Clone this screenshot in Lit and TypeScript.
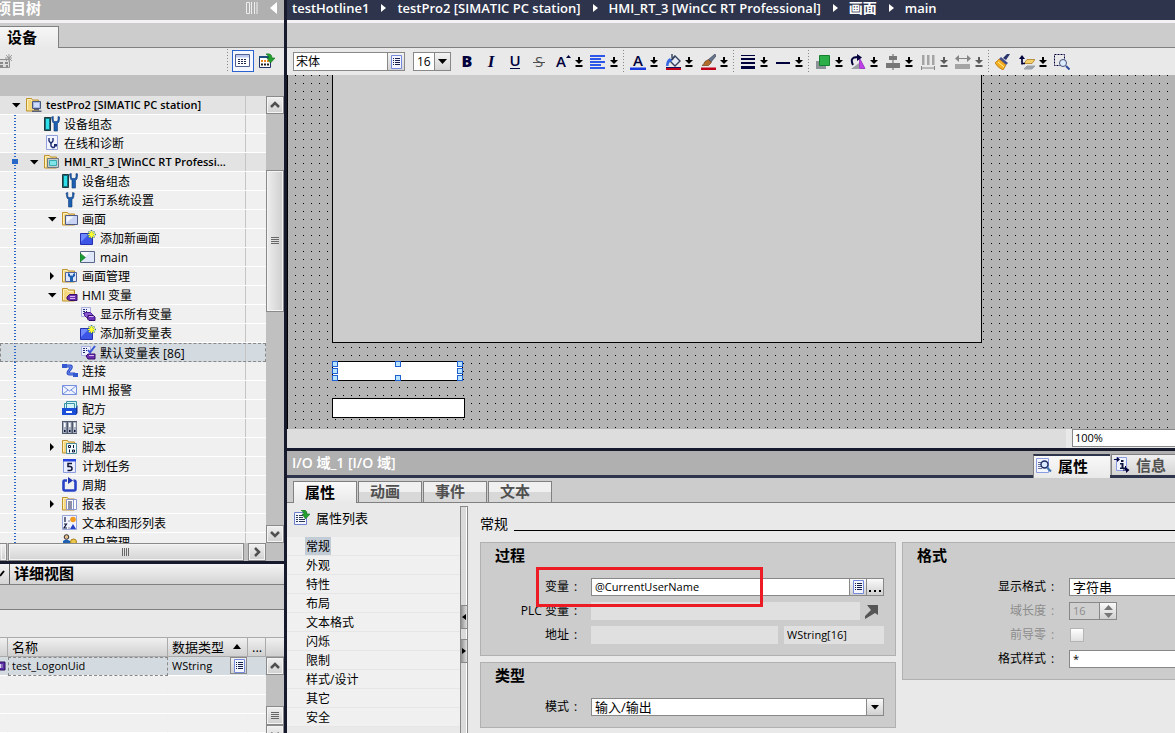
import { LitElement, html, svg, css, nothing, TemplateResult } from "lit";
import { customElement } from "lit/decorators.js";
import { classMap } from "lit/directives/class-map.js";

const folder = svg`<path d="M.5 14V1.5h5l1 1.500h6V14z" fill="#f5d780" stroke="#c0922c"/><path d="M1.500 13V2.500H5l1 2h5" fill="none" stroke="#fdf0b8"/>`;
const page = svg`<path d="M1.500 1.500h9v9h-9z" fill="#eef0ff" stroke="#a8b0e0"/><path d="M3 3.500h2M6 3.500h1M3 5.500h2M6 5.500h1M3 7.500h2" stroke="#222a70"/>`;
const star = svg`<path d="M11.500 0v9M7 4.500h9M8.500 1.500l6 6M14.500 1.500l-6 6" stroke="#3a7a88" stroke-width="1.600"/><path d="M11.500 1v7M8 4.500h7M9 2l5 5M14 2l-5 5" stroke="#ffff30" stroke-width="1.200"/>`;
const wrench = (x: number, y = 0) => svg`<path transform="translate(${x} ${y})" d="M0 1l1 5 1.500 1.500V15h3.500V7.500L7.500 6l.8-5L6.500.5V4L5.500 5.500h-3L1.800 4V.5z" fill="#1d5fb0" stroke="#123c7a" stroke-width=".6"/>`;

const ICONS: Record<string, TemplateResult> = {
  station: svg`${folder}<path d="M6.500 4.500h8v7h-8z" fill="#9fb4e0" stroke="#49577a"/><path d="M8 6h5v4H8z" fill="#cfdcff"/><path d="M8 12h5v1H8zM6 13.500h9.500V15H6z" fill="#59617a"/>`,
  device: svg`<path d="M.5 1.500h6v13h-6z" fill="#15707a" stroke="#203840"/><path d="M2 3h3v10H2z" fill="#2fe0ea"/>${wrench(7.500)}`,
  diagnose: svg`<path d="M2.500.5h11v14h-11z" fill="#f2f4ff" stroke="#93a0dc"/><path d="M5 3v3l2 2.500L9 6V3M7 8.500V11l1.500 1.500H10l1-1.500" fill="none" stroke="#1a2a70" stroke-width="1.400"/><path d="M10 9h3v2.500h-3z" fill="#1a2a70"/>`,
  hmi: svg`${folder}<path d="M3.500 4.500h11v9h-11z" fill="#c6cacd" stroke="#6d7a84"/><path d="M5.500 6.500h7v5h-7z" fill="#7fe4e8" stroke="#3aa9b0"/>`,
  runtime: svg`${wrench(4)}`,
  screens: svg`${folder}<path d="M3.500 4.500h12v9h-12z" fill="#c9d4f2" stroke="#4d5a86"/><path d="M4.500 5.500H12l-7.500 6z" fill="#f4f7ff"/>`,
  add: svg`<path d="M.5 3.500h12v11H.5z" fill="#3c55e6" stroke="#2430b0"/><path d="M1 4h8l-8 8z" fill="#6f8bff"/>${star}`,
  main: svg`<path d="M.5 2.500h14v11H.5z" fill="#dfe7fb" stroke="#5a6686"/><path d="M1 3h9L1 12z" fill="#f8faff"/><path d="M0 4l5.500 4.500L0 13z" fill="#1c9a34" stroke="#0e6a20" stroke-width=".5"/>`,
  manage: svg`${folder}<path d="M3.500 4.500h11v9h-11z" fill="#dfe6fb" stroke="#55659a"/><path d="M6 5v3l2 1.500V14h3V9.500L13 8V5l-2 1v1.500H8V6z" fill="#1d5fb0"/>`,
  tags: svg`${folder}<path d="M5 10l2.500-2.500H15v6H7.500L5 12z" fill="#6b2fb0" stroke="#35106c"/><path d="M8 9.500h5M8 11.500h5" stroke="#d6b8f5"/>`,
  allTags: svg`${page}<path d="M4.500 6.500h6l2 2v3h-6l-2-2z" fill="#8a58d0" stroke="#4a1f90"/><path d="M8 9.500h5.500l1.500 1.500v3.500H9L7.500 13z" fill="#6c34ba" stroke="#35106c"/><path d="M9 10.500h4.500" stroke="#d6b8f5"/>`,
  tagTable: svg`${page}<path d="M8 5l2 2.500L15 1" fill="none" stroke="#3754d8" stroke-width="2"/><path d="M6 11l2-2h7v5H8z" fill="#6b2fb0" stroke="#35106c"/><path d="M9 10.500h5" stroke="#d6b8f5"/>`,
  connect: svg`<path d="M2 3h6q2 0 1 2L6.500 8.500Q5 11 8 11h5" fill="none" stroke="#2746c0" stroke-width="3"/><path d="M2 3h6q2 0 1 2L6.500 8.500Q5 11 8 11h5" fill="none" stroke="#7f9cff"/><path d="M0 1h5v4H0zM11 10h5v4h-5z" fill="#3458d0"/>`,
  mail: svg`<path d="M.5 3.500h14v9H.5z" fill="#eef3ff" stroke="#7590dc"/><path d="M1 4l6.500 5L14 4M1 12l5-4M14 12L9 8" fill="none" stroke="#7590dc"/>`,
  recipe: svg`<path d="M4.500.5h10v7h-10zM2.500 2.500h10v7h-10z" fill="#d5f4f8" stroke="#3b92a8"/><path d="M0 7h14v7H0z" fill="#1c4fd8"/><path d="M14 7l1.500-3v8L14 14z" fill="#12309a"/><path d="M4 10h6v2H4z" fill="#fff"/>`,
  logs: svg`<path d="M0 1h15v13H0z" fill="#50586e"/><path d="M1 2h3.500v11H1zM6 2h3.500v11H6zM11 2h3.500v11H11z" fill="#a8b0c0"/><path d="M2 3h1.500v4H2zM7 3h1.500v4H7zM12 3h1.500v4H12z" fill="#fff"/><path d="M2 10h1.500v2H2zM7 10h1.500v2H7zM12 10h1.500v2H12z" fill="#10163a"/>`,
  script: svg`${folder}<path d="M4.500 4.500h10v10h-10z" fill="#f0fbff" stroke="#4f8c9c"/><path d="M6.500 6.500h2v2h-2zM11.500 6v3M7.500 10.500V13.500M10.500 11h2v2h-2z" fill="none" stroke="#10163a"/>`,
  task: svg`<path d="M1.500 1.500h12v13h-12z" fill="#e9edff" stroke="#8a9be0"/><path d="M1 1h13v2.500H1z" fill="#2a44e0"/><path d="M10 5.500H6v3h2q2 0 2 2t-2 2H5.500" fill="none" stroke="#10163a" stroke-width="1.500"/>`,
  cycle: svg`<path d="M5 3.500H2.500Q1.500 3.500 1.500 5v7q0 1.500 1.500 1.500h9q1.500 0 1.500-1.500V5q0-1.500-2-1.500" fill="none" stroke="#2843c8" stroke-width="2.600"/><path d="M6 0l5 3.500-5 3.500z" fill="#2036b0"/>`,
  report: svg`${folder}<path d="M4.500 3.500h10v10h-10z" fill="#fff" stroke="#8795cc"/><path d="M6 6h4M6 8h4M6 10h4M6 12h4" stroke="#1a2350"/><path d="M11.500 4v9" stroke="#8795cc"/>`,
  list: svg`<path d="M.5.500h14v14H.5z" fill="#f1f4ff" stroke="#9aa6dc"/><path d="M3 2v5M2 9h2.500L2 13h3M6.500 6h1M6.500 13h1" fill="none" stroke="#10163a" stroke-width="1.200"/><circle cx="11" cy="4.500" r="2.800" fill="#f09a20"/><path d="M8 14l3-5 3 5z" fill="#2843c8"/>`,
  users: svg`<circle cx="4.500" cy="3" r="2.300" fill="#e8bd90" stroke="#303030"/><path d="M1 15V7q3-3 7 0v8z" fill="#1d5fb0"/><circle cx="11.500" cy="8" r="3" fill="#ecc64a" stroke="#a8821c"/><path d="M10.500 11h2v4h-2z" fill="#d0a22c"/>`,
  ruler: svg`<path d="M1.500 6.500h11v8h-11z" fill="#ddd" stroke="#8c8c8c"/><path d="M3 9h3v2H3zM8 9h3v2H8zM3 12h3v2H3zM9 12h2v2H9z" fill="#888"/><path d="M12 1v8M8 5h7M9 2l6 6M15 2L9 8" stroke="#999"/>`,
  grid: svg`<path d="M.5 1.500h14v12H.5z" fill="#fff" stroke="#506090"/><path d="M1 2h13v2.500H1z" fill="#bcc8f0"/><path d="M3 6.500h9M3 8.500h9M3 10.500h9" stroke="#222a50" stroke-dasharray="2 1"/>`,
  gridOut: svg`<path d="M.5 3.500h11v11H.5z" fill="#fff" stroke="#1d3565"/><path d="M0 3h10v2H0z" fill="#1d4f80"/><path d="M2 8h8" stroke="#e88820" stroke-width="2" stroke-dasharray="2 1"/><path d="M2 11.500h8" stroke="#202020" stroke-width="2" stroke-dasharray="2 1"/><path d="M7 1q6-1 6 4h3l-4.500 5L8 5h2q0-2-3-4z" fill="#23a030" stroke="#12701c" stroke-width=".6"/>`,
  propList: svg`<path d="M.5 2.500h12v12H.5z" fill="#f4f6ff" stroke="#6e7fd0"/><path d="M2 5.500h2M5 5.500h4M2 7.500h2M5 7.500h4M2 9.500h2M5 9.500h6M2 11.500h2M5 11.500h6" stroke="#303858"/><path d="M7 0q6-1 6 4h3l-4.500 5L8 4h2q0-2-3-4z" fill="#23a030" stroke="#12701c" stroke-width=".6"/>`,
  pick: svg`<path d="M3.500 1.500h10v13h-10z" fill="#f3f5ff" stroke="#7488dc"/><path d="M5 4.500h1M7 4.500h5M5 6.500h1M7 6.500h5M5 8.500h1M7 8.500h5M5 10.500h1M7 10.500h5" stroke="#17204c"/>`,
  bold: svg`<text x="8" y="13" text-anchor="middle" font-size="16" font-weight="800">B</text>`,
  italic: svg`<text class="serif" x="8" y="13" text-anchor="middle" font-size="17">I</text>`,
  underline: svg`<text x="8" y="12" text-anchor="middle" font-size="15" font-weight="600">U</text><path d="M3 14.500h10" stroke="#00003c"/>`,
  strike: svg`<text class="soft" x="8" y="13" text-anchor="middle" font-size="15">S</text><path d="M2 8.500h12" stroke="#505050"/>`,
  grow: svg`<text x="6" y="13" text-anchor="middle" font-size="15" font-weight="600">A</text><path d="M11 4l2.500-3L16 4z" fill="#00003c"/>`,
  align: svg`<path d="M0 2h15M0 5h11M0 8h15M0 11h11M0 14h15" stroke="#2c57e8" stroke-width="1.800"/>`,
  color: svg`<text x="8" y="12" text-anchor="middle" font-size="15" font-weight="600">A</text><path d="M0 13.500h16v2.500H0z" fill="#1838e0"/>`,
  fill: svg`<path d="M6 6l4-4 5 5-5 5-5-5z" fill="#e6ebf4" stroke="#33405e" stroke-width="1.400"/><path d="M7 4V0M10 2l-3 4" stroke="#33405e" stroke-width="1.400"/><path d="M5 4Q1 6 1 12h2.500q0-4 3.500-5z" fill="#3568e0"/><path d="M1 13.500h15V16H1z" fill="#c00018"/><path d="M1 13.500h15" stroke="#101460"/>`,
  brush: svg`<path d="M15 0L8.500 5.500l2.500 2.500 5-6z" fill="#66748c" stroke="#30384a" stroke-width=".6"/><path d="M8.500 5.500l3 3-3 3H2q2-1 3-4z" fill="#b06c28" stroke="#5e3410" stroke-width=".6"/><path d="M1 13.500h15V16H1z" fill="#c00018"/>`,
  weights: svg`<path d="M1 1.500h14" stroke="#00003c"/><path d="M1 5h14" stroke="#00003c" stroke-width="2"/><path d="M1 9h14" stroke="#00003c" stroke-width="2"/><path d="M1 13.500h14" stroke="#00003c" stroke-width="3"/>`,
  line: svg`<path d="M1 9h14" stroke="#00003c" stroke-width="2"/>`,
  order: svg`<path d="M1 7h10v8H1z" fill="#8b9298"/><path d="M4.500 1.500h10v10h-10z" fill="#2cae48" stroke="#158030"/>`,
  rotate: svg`<path d="M1 15l8-6v6z" fill="#9aa0a6"/><path d="M9.500 14.500V4l5.500 10.500z" fill="#c040e8" stroke="#8820b8" stroke-width=".7"/><path d="M3 11Q-1 3 8 3" fill="none" stroke="#00003c" stroke-width="2"/><path d="M7 0l5 3.500L7 7z" fill="#00003c"/>`,
  center: svg`<path d="M8 0v16" stroke="#606060"/><path d="M4 2h8v4H4zM1 9h14v5H1z" fill="#777"/>`,
  spread: svg`<path d="M2 1h2.500v10H2zM7 1h2.500v10H7zM12 1h2.500v10H12z" fill="#777"/><path d="M1 14h14M1.500 12v4M14.500 12v4" stroke="#444"/>`,
  width: svg`<path d="M3 4.500h10" stroke="#444"/><path d="M0 4.500L4 1v7zM16 4.500L12 1v7z" fill="#444"/><path d="M0 10h15v5H0z" fill="#777"/>`,
  painter: svg`<path d="M15 0l-4 6-3-2 4-4z" fill="#26336c"/><path d="M6 3l7 6-2 2-7-6z" fill="#44508c"/><path d="M4 5l7 6-3 5Q3 14 0 9z" fill="#f4b020" stroke="#b06a10" stroke-width=".7"/><path d="M3 8l6 5" stroke="#fff0a0"/>`,
  layers: svg`<path d="M5 15l3-3h8l-3 3z" fill="#9ba2aa" stroke="#9ba2aa"/><path d="M5 9.500l3-4h8l-3 4z" fill="#f2cf68" stroke="#b07c20" stroke-width=".8"/><path d="M3 3v7.500M3 9.500h3" stroke="#00003c" stroke-width="1.700"/><path d="M0 5l3-4 3 4z" fill="#00003c"/>`,
  zoomArea: svg`<path d="M.5.500h10v11H.5z" fill="none" stroke="#00003c" stroke-dasharray="2 1"/><circle cx="9" cy="9" r="3.500" fill="#dcecff" stroke="#44507c"/><path d="M12 12l3.500 3.500" stroke="#2c4ca0" stroke-width="2"/>`,
  goto: svg`<path d="M1 13l6-6-4-5h11v10l-3-2-10 6z" fill="#555" stroke="none"/>`,
  propTab: svg`<path d="M.5.500h12v14H.5z" fill="#f3f6ff" stroke="#8b9ce0"/><path d="M2 4.500h4M2 6.500h3M2 8.500h3M2 10.500h4" stroke="#68739c"/><circle cx="8.500" cy="6.500" r="3.500" fill="#dceaff" stroke="#1e2a60" stroke-width="1.400"/><path d="M11 9.500l4 4" stroke="#4478b0" stroke-width="2.200"/>`,
  infoTab: svg`<path d="M2.500.5h10v13h-10z" fill="#eef3ff" stroke="#8b9ce0"/><path d="M0 2.500h5M9 13h5M11.500 9v4" stroke="#00003c"/><path d="M3 0l3 2.500L3 5zM12 10.500l3.500 2.500-3.500 3z" fill="#00003c"/><path d="M7 3h2.500v2H7zM6 6h3.500v4.500H11V12H6v-1.500h1.500v-3H6z" fill="#10163a"/>`,
};

const icon = (name: string) => html`<svg class="icon" viewBox="0 0 16 16" aria-hidden="true">${ICONS[name]}</svg>`;
const chevron = (dir: string) => html`<svg class="chev ${dir}" viewBox="0 0 12 12" aria-hidden="true"><path d="M2 8l4-4 4 4" fill="none" stroke="#505050" stroke-width="2.500"/></svg>`;

const base = css`
  :host { font-family: "Open Sans", "Noto Sans CJK SC", sans-serif; font-size: 12px; line-height: 18px; color: #000; }
  *, *::before { box-sizing: border-box; }
  button, input, select { font: inherit; color: inherit; margin: 0; padding: 0; border: 0; border-radius: 0; background: none; appearance: none; }
  h1, h2, h3, ul { margin: 0; padding: 0; font: inherit; list-style: none; }
  a { color: inherit; text-decoration: none; }
  .icon { width: 16px; height: 16px; flex: none; display: block; }
  .icon text { font-family: "Open Sans", sans-serif; fill: #00003c; }
  .icon .serif { font-family: "Liberation Serif", serif; font-style: italic; font-weight: 700; }
  .icon .soft { fill: #505050; }
  .chev { width: 12px; height: 12px; display: block; }
  .chev.down { transform: rotate(180deg); }
  .chev.right { transform: rotate(90deg); }
  .push { display: grid; place-items: center; border: 1px solid #8a8a8a; outline: 1px solid #f4f4f4; outline-offset: -2px; background: linear-gradient(#f0f0f0, #d0d0d0); }
`;

interface Node { text: string; level: number; icon: string; arrow?: "open" | "closed"; kind?: string }
const TREE: Node[] = [
  { text: "testPro2 [SIMATIC PC station]", level: 0, icon: "station", arrow: "open", kind: "root" },
  { text: "设备组态", level: 1, icon: "device" },
  { text: "在线和诊断", level: 1, icon: "diagnose" },
  { text: "HMI_RT_3 [WinCC RT Professi...", level: 1, icon: "hmi", arrow: "open", kind: "station" },
  { text: "设备组态", level: 2, icon: "device" },
  { text: "运行系统设置", level: 2, icon: "runtime" },
  { text: "画面", level: 2, icon: "screens", arrow: "open" },
  { text: "添加新画面", level: 3, icon: "add" },
  { text: "main", level: 3, icon: "main" },
  { text: "画面管理", level: 2, icon: "manage", arrow: "closed" },
  { text: "HMI 变量", level: 2, icon: "tags", arrow: "open" },
  { text: "显示所有变量", level: 3, icon: "allTags" },
  { text: "添加新变量表", level: 3, icon: "add" },
  { text: "默认变量表 [86]", level: 3, icon: "tagTable", kind: "selected" },
  { text: "连接", level: 2, icon: "connect" },
  { text: "HMI 报警", level: 2, icon: "mail" },
  { text: "配方", level: 2, icon: "recipe" },
  { text: "记录", level: 2, icon: "logs" },
  { text: "脚本", level: 2, icon: "script", arrow: "closed" },
  { text: "计划任务", level: 2, icon: "task" },
  { text: "周期", level: 2, icon: "cycle" },
  { text: "报表", level: 2, icon: "report", arrow: "closed" },
  { text: "文本和图形列表", level: 2, icon: "list" },
  { text: "用户管理", level: 2, icon: "users" },
];

@customElement("project-tree")
export class ProjectTree extends LitElement {
  static styles = [base, css`
    :host { display: flex; flex-direction: column; min-height: 0; background: #e9e9e9; overflow: hidden; }
    .title { display: flex; align-items: center; gap: 12px; height: 20px; padding-right: 7px; background: #b0b0b0; color: #fff; flex: none; }
    .title h1 { flex: 1; text-indent: -4px; font-size: 15px; font-weight: 700; line-height: 16px; padding-bottom: 5px; }
    .title button { display: block; height: 14px; margin-bottom: 5px; }
    .title svg { display: block; height: 12px; }
    .tabs { height: 28px; border-top: 3px solid #f3f1f3; border-bottom: 1px solid #808080; background: #ccc; flex: none; }
    .tab { display: block; width: 59px; height: 22px; margin-top: 3px; padding: 0 0 2px 7px; text-align: left; font-size: 15px; font-weight: 700; line-height: 18px; background: linear-gradient(#f6f6f6, #e9e9e9); border-top: 1px solid #808080; border-right: 1px solid #808080; }
    .tools { display: flex; align-items: center; height: 27px; flex: none; padding: 0 9px 2px 0; }
    .tools .first { margin: 0 auto 0 -3px; }
    .tools .grid { width: 22px; height: 22px; display: grid; place-items: center; border: 1px solid #2a62d0; background: #f4f7ff; margin: 0 5px 0 4px; }
    .dots { width: 1px; height: 23px; background: repeating-linear-gradient(#888 0 1px, transparent 1px 3px); }
    .head { height: 21px; background: #c0c0c0; flex: none; }
    .body { flex: 1; min-height: 0; display: grid; grid-template-columns: 1fr 18px; overflow: hidden; }
    .rows { overflow: hidden; background: #f0f0f0; }
    .row { display: flex; align-items: center; width: 100%; height: 19px; border-bottom: 1px solid #fff; white-space: nowrap; line-height: 18px;
      background: repeating-linear-gradient(#2a68c8 0 1px, transparent 1px 3px) 14px 0 / 2px 100% no-repeat, linear-gradient(#c4c4c4, #c4c4c4) 245px 0 / 1px 100% no-repeat; }
    .l0 { padding-left: 10px; } .l1 { padding-left: 28px; } .l2 { padding-left: 46px; } .l3 { padding-left: 64px; }
    .arrow { width: 12px; height: 12px; margin-right: 4px; flex: none; }
    .arrow svg { display: block; width: 12px; height: 12px; }
    .label { margin-left: 4px; padding-top: 2px; line-height: 18px; }
    .root, .station { font-size: 11px; font-weight: 600; }
    .root .label, .station .label { padding-top: 0; }
    .root { background: linear-gradient(#c4c4c4, #c4c4c4) 245px 0 / 1px 100% no-repeat #e3e3e3; }
    .station { background: linear-gradient(#2a68c8, #2a68c8) 12px 6px / 6px 5px no-repeat, repeating-linear-gradient(#2a68c8 0 1px, transparent 1px 3px) 14px 0 / 2px 100% no-repeat, linear-gradient(#c4c4c4, #c4c4c4) 245px 0 / 1px 100% no-repeat, #e3e3e3; }
    .selected { background-color: #d4dbe0; border-bottom: 0; outline: 1px dashed #888; outline-offset: -1px; }
    .vbar { display: grid; grid-template-rows: 18px 56px 142px 1fr 18px; background: #c0c0c0; }
    .thumb { grid-row: 3; background: linear-gradient(90deg, #ededed, #cfcfcf); }
    .vbar .end { grid-row: 5; }
    .grip { width: 8px; height: 8px; background: repeating-linear-gradient(#666 0 1px, transparent 1px 2px); }
    .hbar { display: grid; grid-template-columns: 7px 1px 236px 1fr 18px 18px; height: 18px; background: #c0c0c0; flex: none; }
    .hbar .thumb { grid-column: 3; grid-row: 1; background: linear-gradient(#f0f0f0, #d4d4d4); }
    .hbar .grip { background: repeating-linear-gradient(90deg, #666 0 1px, transparent 1px 2px); }
    .hbar .next { grid-column: 5; }
    .hbar .prev { border-left: 0; }
  `];
  render() {
    return html`
      <header class="title"><h1>项目树</h1>
        <button aria-label="停靠"><svg width="12" viewBox="0 0 12 12"><path d="M.5.500h3v11h-3zM5.500 0v12M8.500 0v12M11 0v12" fill="none" stroke="#eee"/></svg></button>
        <button aria-label="折叠"><svg width="7" viewBox="0 0 7 12"><path d="M7 0v12L0 6z" fill="#fff"/></svg></button>
      </header>
      <div class="tabs"><button class="tab">设备</button></div>
      <div class="tools"><button class="first" aria-label="新建">${icon("ruler")}</button><span class="dots"></span>
        <button class="grid" aria-label="详细列表">${icon("grid")}</button><button aria-label="导出列表">${icon("gridOut")}</button></div>
      <div class="head"></div>
      <div class="body">
        <ul class="rows">${TREE.map((n) => html`<li><button class="row l${n.level} ${n.kind ?? ""}">
          <span class="arrow">${n.arrow ? html`<svg viewBox="0 0 12 12"><path d=${n.arrow === "open" ? "M2 4h8.500L6.300 8.500z" : "M4 2v8l4-4z"}/></svg>` : nothing}</span>
          ${icon(n.icon)}<span class="label">${n.text}</span></button></li>`)}</ul>
        <div class="vbar"><button class="push" aria-label="向上">${chevron("up")}</button>
          <div class="push thumb"><span class="grip"></span></div>
          <button class="push end" aria-label="向下">${chevron("down")}</button></div>
      </div>
      <div class="hbar"><button class="push prev" aria-label="向左"></button><div class="push thumb"><span class="grip"></span></div>
        <button class="push next" aria-label="向右">${chevron("right")}</button></div>`;
  }
}

@customElement("detail-view")
export class DetailView extends LitElement {
  static styles = [base, css`
    :host { display: flex; flex-direction: column; background: #e9e9e9; overflow: hidden; }
    .title { display: flex; height: 21px; flex: none; background: linear-gradient(#f4f4f4, #d4d4d4); border-bottom: 1px solid #808080; }
    .fold { width: 10px; border-right: 1px solid #606060; display: grid; place-items: center start; }
    h2 { padding-left: 4px; font-size: 15px; font-weight: 700; line-height: 19px; }
    .strip { height: 25px; flex: none; background: #ccc; border-bottom: 1px solid #808080; }
    .gap { height: 27px; flex: none; }
    .wrap { flex: 1; display: grid; grid-template-columns: 1fr 18px; min-height: 0; background: #f0f0f0; }
    table { width: 100%; border-collapse: separate; border-spacing: 0; table-layout: fixed; }
    th, td { height: 19px; padding: 0 0 1px 4px; text-align: left; font-weight: 400; line-height: 16px; border-right: 1px solid #aaa; border-bottom: 1px solid #fff; overflow: hidden; white-space: nowrap; }
    th { font-size: 13px; height: 20px; background: linear-gradient(#f0f0f0, #d0d0d0); border-top: 1px solid #aaa; border-bottom: 1px solid #aaa; }
    td { border-right-color: transparent; font-size: 11px; }
    .c0 { width: 8px; padding: 0; } .c1 { width: 160px; } .c2 { width: 80px; }
    .cell { display: flex; align-items: center; justify-content: space-between; height: 17px; }
    .sort { margin-right: 6px; width: 8px; }
    .sel td { background: #d4dbe0; }
    .sel .name { outline: 1px dashed #888; outline-offset: -1px; }
    .sel .c0 .icon { margin-left: -10px; }
    .cell .push { width: 17px; height: 17px; outline: 0; }
    .bar { display: grid; grid-template-rows: 20px 18px 31px 19px 19px; background: #c0c0c0; overflow: hidden; }
    .corner { background: linear-gradient(#f0f0f0, #d0d0d0); border: 1px solid #aaa; border-width: 1px 0; }
    .thumb { grid-row: 4; }
    .end { grid-row: 5; }
    .grip { width: 8px; height: 8px; background: repeating-linear-gradient(#666 0 1px, transparent 1px 2px); }
  `];
  render() {
    return html`
      <header class="title"><button class="fold" aria-label="折叠"><svg width="5" height="8" viewBox="0 0 5 8"><path d="M0 6l4-5" stroke="#000" stroke-width="2"/></svg></button><h2>详细视图</h2></header>
      <div class="strip"></div><div class="gap"></div>
      <div class="wrap">
        <div><table>
          <thead><tr><th class="c0"></th><th class="c1">名称</th><th class="c2"><span class="cell">数据类型<svg class="sort" viewBox="0 0 8 5"><path d="M0 5l4-5 4 5z"/></svg></span></th><th>...</th></tr></thead>
          <tbody><tr class="sel"><td class="c0"><svg class="icon" viewBox="0 0 16 16"><path d="M4 4h11v8H4z" fill="#5a2aa8" stroke="#281060"/><path d="M6 6h7v4H6z" fill="#e0d0ff"/><path d="M9 6v4M12 6v4" stroke="#281060"/></svg></td>
            <td class="name">test_LogonUid</td><td><span class="cell">WString<button class="push" aria-label="选择类型">${icon("pick")}</button></span></td><td></td></tr>
            ${[0, 1, 2].map(() => html`<tr><td></td><td></td><td></td><td></td></tr>`)}</tbody>
        </table></div>
        <div class="bar"><span class="corner"></span><button class="push" aria-label="向上">${chevron("up")}</button><div class="push thumb"><span class="grip"></span></div><button class="push end" aria-label="向下">${chevron("down")}</button></div>
      </div>`;
  }
}

interface Tool { icon: string; label: string; drop?: boolean; off?: boolean; sep?: boolean }
const TOOLS: Tool[] = [
  { icon: "bold", label: "粗体" }, { icon: "italic", label: "斜体" }, { icon: "underline", label: "下划线" }, { icon: "strike", label: "删除线" },
  { icon: "grow", label: "字号", drop: true }, { icon: "align", label: "对齐", drop: true, sep: true },
  { icon: "color", label: "文本颜色", drop: true }, { icon: "fill", label: "背景颜色", drop: true }, { icon: "brush", label: "边框颜色", drop: true, sep: true },
  { icon: "weights", label: "线宽", drop: true }, { icon: "line", label: "线型", drop: true, sep: true },
  { icon: "order", label: "层次", drop: true }, { icon: "rotate", label: "旋转", drop: true }, { icon: "center", label: "居中", drop: true },
  { icon: "spread", label: "分布", drop: true, off: true }, { icon: "width", label: "宽度", drop: true, off: true, sep: true },
  { icon: "painter", label: "格式刷" }, { icon: "layers", label: "图层", drop: true }, { icon: "zoomArea", label: "缩放选区" },
];

@customElement("screen-editor")
export class ScreenEditor extends LitElement {
  static styles = [base, css`
    :host { display: flex; flex-direction: column; min-height: 0; min-width: 0; }
    .crumbs { display: flex; align-items: center; gap: 12px; height: 20px; flex: none; padding: 0 5px 4px; background: #2d344b; color: #fff; font-size: 13px; font-weight: 600; line-height: 16px; white-space: nowrap; }
    .crumbs svg { width: 5px; height: 8px; margin: 0 -1px 0 0; }
    .crumbs .cjk { font-size: 14px; }
    .strip { height: 28px; flex: none; background: #ccc; border-top: 3px solid #f3f1f3; border-bottom: 1px solid #808080; }
    .bar { display: flex; align-items: center; height: 27px; flex: none; padding-left: 6px; background: #e9e9e9; overflow: hidden; }
    .combo { display: flex; height: 19px; border: 1px solid #888; background: #fff; }
    .combo input { width: 93px; padding-left: 2px; font-size: 12px; }
    .combo.size { margin: 0 6px 0 8px; }
    .combo.size input { width: 20px; padding-left: 3px; }
    .combo button { width: 17px; display: grid; place-items: center; border-left: 1px solid #888; background: linear-gradient(#f4f4f4, #d4d4d4); }
    .combo.size button { width: 16px; }
    .tool { width: 20px; height: 20px; display: grid; place-items: center; margin-right: 4px; flex: none; }
    .drop { width: 31px; grid-template-columns: 20px 11px; }
    .off { opacity: .6; }
    .dots { width: 1px; height: 23px; margin-right: 4px; background: repeating-linear-gradient(#888 0 1px, transparent 1px 3px); }
    .tri { width: 8px; height: 10px; }
    .canvas { position: relative; flex: 1; min-height: 0; overflow: hidden; background: linear-gradient(#000, #000) 0 0 / 1px 100% no-repeat, conic-gradient(at 1px 1px, #b4b4b4 0 270deg, #000 0) 0 0 / 8px 8px; }
    .screen { position: absolute; left: 45px; top: 0; width: 650px; height: 268px; background: #ccc; border: 1px solid #000; border-top: 0; }
    .field { position: absolute; left: 45px; height: 20px; background: #fff; border: 1px solid #000; }
    .f1 { top: 286px; width: 131px; }
    .f2 { top: 323px; width: 133px; }
    .handles { position: absolute; inset: -1px; display: grid; grid-template-columns: repeat(3, 6px); justify-content: space-between; align-content: space-between; }
    .handles i { width: 6px; height: 6px; border: 1px solid #2060d0; background: #b8e4ff; }
    .handles i.none { visibility: hidden; }
    .status { display: flex; justify-content: flex-end; height: 19px; flex: none; background: #ddd; }
    .zoom { display: flex; padding-left: 6px; background: #e9e9e9; }
    .zoom input { width: 103px; height: 18px; padding-left: 2px; font-size: 11px; border: 1px solid #888; border-right: 0; background: #fff; }
  `];
  render() {
    const crumbs = ["testHotline1", "testPro2 [SIMATIC PC station]", "HMI_RT_3 [WinCC RT Professional]", "画面", "main"];
    return html`
      <nav class="crumbs">${crumbs.map((c, i) => html`${i ? html`<svg viewBox="0 0 5 8"><path d="M0 0l5 4-5 4z" fill="#fff"/></svg>` : nothing}<a href="#" class=${classMap({ cjk: c === "画面" })}>${c}</a>`)}</nav>
      <div class="strip"></div>
      <div class="bar">
        <div class="combo"><input aria-label="字体" value="宋体"><button aria-label="选择字体">${icon("pick")}</button></div>
        <div class="combo size"><input aria-label="字号" value="16"><button aria-label="选择字号"><svg width="9" height="5" viewBox="0 0 9 5"><path d="M0 0h9L4.500 5z"/></svg></button></div>
        ${TOOLS.map((t) => html`<button class=${classMap({ tool: true, drop: !!t.drop, off: !!t.off })} aria-label=${t.label}>${icon(t.icon)}${t.drop ? html`<svg class="tri" viewBox="0 0 8 10"><path d="M3 0h2v3h3L4 7 0 3h3zM.5 8h7v2h-7z"/></svg>` : nothing}</button>${t.sep ? html`<span class="dots"></span>` : nothing}`)}
      </div>
      <div class="canvas"><div class="screen"></div>
        <div class="field f1"><div class="handles">${[1, 1, 1, 1, 0, 1, 1, 1, 1].map((v) => html`<i class=${v ? "" : "none"}></i>`)}</div></div>
        <div class="field f2"></div></div>
      <div class="status"><div class="zoom"><input aria-label="缩放" value="100%"></div></div>`;
  }
}

@customElement("property-inspector")
export class PropertyInspector extends LitElement {
  static styles = [base, css`
    :host { display: flex; flex-direction: column; min-width: 0; background: #e9e9e9; overflow: hidden; }
    .title { display: flex; justify-content: space-between; height: 27px; flex: none; background: linear-gradient(#2d344b, #2d344b) 0 100% / 100% 3px no-repeat #b0b0b0; }
    .title h2 { padding-left: 5px; color: #fff; font-size: 14px; font-weight: 600; line-height: 23px; }
    .side { display: flex; gap: 1px; padding-top: 3px; }
    .side button { display: flex; align-items: center; gap: 6px; font-size: 15px; font-weight: 700; line-height: 18px; padding: 0 0 3px 2px; }
    .side .on { width: 77px; height: 24px; background: linear-gradient(#f8f8f8, #e9e9e9); border-top: 2px solid #2d344b; border-left: 1px solid #808080; }
    .side .other { width: 64px; height: 21px; padding-bottom: 0; color: #505050; background: linear-gradient(#f0f0f0, #d4d4d4); border-top: 1px solid #808080; border-left: 1px solid #808080; }
    .tabs { display: flex; align-items: flex-end; gap: 1px; height: 25px; flex: none; padding-left: 6px; background: linear-gradient(#808080, #808080) 0 100% / 100% 1px no-repeat #ccc; }
    .tab { width: 64px; height: 22px; padding: 0 10px 2px 0; font-size: 15px; font-weight: 700; line-height: 18px; color: #505050; border: 1px solid #808080; background: linear-gradient(#f0f0f0 50%, #d8d8d8 50%); }
    .tab.on { color: #000; border-bottom: 0; background: linear-gradient(#fafafa, #e9e9e9); }
    .content { flex: 1; display: grid; grid-template-columns: 173px 8px 1fr; min-height: 0; }
    .prop { display: flex; align-items: center; gap: 6px; height: 34px; padding: 0 0 4px 7px; font-size: 13px; }
    .nav a { display: block; height: 19px; padding-left: 18px; border-bottom: 1px solid #e6e6e6; background: #f0f0f0; }
    .nav span { display: inline-block; padding: 0 1px; height: 18px; line-height: 20px; vertical-align: top; }
    .nav .on { background: #c2ccd6; }
    .split { display: grid; grid-template-rows: 98px 24px 10px 24px; margin-top: 3px; border: 1px solid #888; border-bottom: 0; background: linear-gradient(90deg, #dadada 5px, #fff 5px); }
    .split button { display: grid; place-items: center; background: linear-gradient(90deg, #909090, #e0e0e0); border: 1px solid #888; border-width: 1px 0; }
    .split button:first-child { grid-row: 2; } .split button:last-child { grid-row: 4; }
    .form { padding-left: 12px; min-width: 0; }
    .head { display: flex; align-items: center; gap: 6px; height: 39px; padding-top: 3px; font-size: 14px; }
    .head::after { content: ""; flex: 1; height: 1px; margin-top: 12px; background: #000; }
    .cols { display: grid; grid-template-columns: 416px 1fr; gap: 6px; align-items: start; }
    .stack { display: grid; gap: 6px; }
    .card { position: relative; background: #ccc; border: 1px solid #b0b0b0; padding: 0 11px 11px 14px; }
    .card.wide { padding-right: 0; border-right: 0; }
    .card h3 { font-size: 15px; font-weight: 700; line-height: 24px; height: 35px; }
    .lines { display: grid; row-gap: 6px; }
    .line { display: grid; grid-template-columns: 74px 22px 1fr; height: 18px; align-items: center; }
    .wide .line { grid-template-columns: 129px 23px 1fr; }
    label { text-align: right; white-space: nowrap; justify-self: end; }
    .colon { padding-left: 5px; line-height: 16px; }
    .box { display: flex; height: 18px; border: 1px solid #888; background: #fff; min-width: 0; }
    .box input, .box select { flex: 1; min-width: 0; height: 16px; line-height: 16px; padding-left: 3px; font-size: 13px; }
    .box input { font-size: 11px; }
    .box .b { width: 17px; display: grid; place-items: center; border-left: 1px solid #888; background: linear-gradient(#fafafa, #d0d0d0); flex: none; overflow: hidden; }
    .box .more { padding-top: 6px; }
    .picker { display: grid; grid-template-columns: 1fr 17px; flex: 1; min-width: 0; }
    .picker select { grid-area: 1 / 1 / 2 / 3; }
    .picker .b { grid-area: 1 / 2; pointer-events: none; }
    .box.open { border-right: 0; }
    .ro { height: 18px; background: #e0e0e0; padding: 0 0 1px 3px; font-size: 11px; width: 100%; min-width: 0; }
    .pair { display: grid; grid-template-columns: 1fr 24px; align-items: center; }
    .pair .icon { margin-left: 4px; }
    .addr { display: grid; grid-template-columns: 1fr 100px; gap: 6px; }
    .dim { color: #8c8c8c; }
    .num { width: 48px; background: #d0d0d0; }
    .num input { width: 20px; }
    .check { width: 14px; height: 14px; border: 1px solid #b4b4b4; background: linear-gradient(#fff, #e0e0e0); margin-left: 1px; }
    .mark { position: absolute; left: 55px; top: 24px; width: 227px; height: 40px; border: 3px solid #ed1c24; pointer-events: none; }
  `];
  render() {
    const tri = html`<svg width="8" height="5" viewBox="0 0 8 5"><path d="M0 0h8L4 4.500z"/></svg>`;
    const colon = html`<span class="colon">:</span>`;
    return html`
      <header class="title"><h2>I/O 域_1 [I/O 域]</h2>
        <div class="side"><button class="on">${icon("propTab")}属性</button><button class="other">${icon("infoTab")}信息</button></div></header>
      <div class="tabs">${["属性", "动画", "事件", "文本"].map((t, i) => html`<button class=${classMap({ tab: true, on: i === 0 })}>${t}</button>`)}</div>
      <div class="content">
        <nav class="nav"><div class="prop">${icon("propList")}属性列表</div>
          ${["常规", "外观", "特性", "布局", "文本格式", "闪烁", "限制", "样式/设计", "其它", "安全"].map((t, i) => html`<a href="#"><span class=${i ? "" : "on"}>${t}</span></a>`)}</nav>
        <div class="split"><button aria-label="收起"><svg width="4" height="6" viewBox="0 0 4 6"><path d="M4 0v6L0 3z"/></svg></button><button aria-label="展开"><svg width="4" height="6" viewBox="0 0 4 6"><path d="M0 0v6l4-3z"/></svg></button></div>
        <div class="form"><h2 class="head">常规</h2>
          <div class="cols">
            <div class="stack">
              <section class="card"><h3>过程</h3><div class="lines">
                <div class="line"><label for="tag">变量</label>${colon}<div class="box"><input id="tag" value="@CurrentUserName"><button class="b" aria-label="选择变量">${icon("pick")}</button><button class="b more" aria-label="更多"><svg width="12" height="3" viewBox="0 0 12 3"><path d="M0 1h2v2H0zM5 1h2v2H5zM10 1h2v2h-2z"/></svg></button></div></div>
                <div class="line"><label for="plc">PLC 变量</label>${colon}<div class="pair"><input class="ro" id="plc" readonly>${icon("goto")}</div></div>
                <div class="line"><label for="addr">地址</label>${colon}<div class="addr"><input class="ro" id="addr" readonly><input class="ro" aria-label="数据类型" readonly value="WString[16]"></div></div>
              </div><div class="mark"></div></section>
              <section class="card"><h3>类型</h3><div class="lines">
                <div class="line"><label for="mode">模式</label>${colon}<div class="box"><div class="picker"><select id="mode"><option>输入/输出</option></select><span class="b">${tri}</span></div></div></div>
              </div></section>
            </div>
            <section class="card wide"><h3>格式</h3><div class="lines">
              <div class="line"><label for="fmt">显示格式</label>${colon}<div class="box open"><select id="fmt"><option>字符串</option></select></div></div>
              <div class="line dim"><label for="len">域长度</label>${colon}<div class="box num"><input id="len" value="16" disabled><span class="b"><svg width="9" height="13" viewBox="0 0 9 13"><path d="M0 5l4.500-5L9 5zM0 8h9l-4.500 5z" fill="#777"/></svg></span></div></div>
              <div class="line dim"><label for="zero">前导零</label>${colon}<input class="check" id="zero" type="checkbox" disabled></div>
              <div class="line"><label for="pat">格式样式</label>${colon}<div class="box open"><input id="pat" value="*"></div></div>
            </div></section>
          </div>
        </div>
      </div>`;
  }
}

@customElement("app-root")
export class AppRoot extends LitElement {
  static styles = css`
    :host { display: grid; grid-template-columns: 284px 1fr; column-gap: 3px; height: 100vh; overflow: hidden; background: #171a2c; }
    .left { display: grid; grid-template-rows: minmax(0, 1fr) 169px; row-gap: 3px; min-height: 0; }
    .right { display: grid; grid-template-rows: minmax(0, 1fr) 282px; row-gap: 3px; min-width: 0; min-height: 0; }
  `;
  render() {
    return html`<div class="left"><project-tree></project-tree><detail-view></detail-view></div>
      <main class="right"><screen-editor></screen-editor><property-inspector></property-inspector></main>`;
  }
}
